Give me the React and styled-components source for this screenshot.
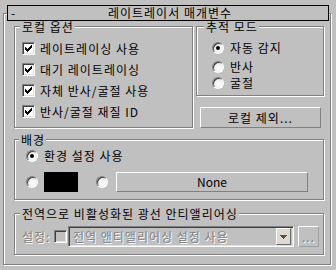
import React from "react";
import styled, { createGlobalStyle } from "styled-components";

const BG = "#c0c0c0";

const Global = createGlobalStyle`
  html, body { margin: 0; padding: 0; background: ${BG}; }
  * { box-sizing: border-box; }
`;

const Page = styled.div`
  width: 336px;
  height: 270px;
  overflow: hidden;
  background: ${BG};
  padding-top: 5px;
  font-family: "Noto Sans CJK KR", "Noto Sans", sans-serif;
  font-size: 12px;
  letter-spacing: 1px;
  color: #000;
`;

const TitleBar = styled.div`
  position: relative;
  z-index: 1;
  margin-left: 7px;
  width: 322px;
  height: 16px;
  border: 1px solid #000;
  background: ${BG};
  display: flex;
  align-items: center;
  padding-left: 3px;
  line-height: 14px;
`;

const Collapse = styled.span`
  width: 5px;
`;

const TitleText = styled.span`
  flex: 1;
  text-align: center;
  padding-right: 4px;
  white-space: nowrap;
`;

const Rollout = styled.div`
  margin: -8px 0 0 3px;
  width: 328px;
  height: 252px;
  border: 1px solid #808080;
  box-shadow: inset 1px 1px 0 #fff, 1px 1px 0 #fff;
  padding: 12px 0 0 10px;
  display: flex;
  flex-direction: column;
  align-items: flex-start;
`;

const TopRow = styled.div`
  display: grid;
  grid-template-columns: 179px 128px;
  column-gap: 3px;
  align-items: start;
`;

const Column = styled.div`
  display: flex;
  flex-direction: column;
  align-items: flex-start;
`;

const Group = styled.div`
  width: ${(p) => p.$w}px;
  height: ${(p) => p.$h}px;
  margin-top: ${(p) => p.$mt || 0}px;
  border: 1px solid #808080;
  box-shadow: inset 1px 1px 0 #fff, 1px 1px 0 #fff;
  display: flex;
  flex-direction: column;
  align-items: flex-start;
`;

const Legend = styled.span`
  margin: -6px 0 0 ${(p) => p.$indent}px;
  padding: 0 1px 0 2px;
  height: 12px;
  line-height: 12px;
  background: ${BG};
  white-space: nowrap;
`;

const Row = styled.div`
  display: flex;
  align-items: center;
  height: ${(p) => p.$h}px;
  margin-top: ${(p) => p.$mt || 0}px;
  padding-left: ${(p) => p.$pl}px;
  gap: ${(p) => p.$gap || 0}px;
  white-space: nowrap;
  line-height: 14px;
`;

const CheckBox = styled.span`
  width: 13px;
  height: 13px;
  flex-shrink: 0;
  border: 1px solid;
  border-color: #808080 #fff #fff #808080;
  box-shadow: inset 1px 1px 0 #404040, inset -1px -1px 0 #dfdfdf;
  background: ${(p) => (p.$disabled ? BG : "#fff")};
  display: flex;
  align-items: center;
  justify-content: center;
`;

const Radio = styled.span`
  width: 12px;
  height: 12px;
  flex-shrink: 0;
  border-radius: 50%;
  border: 1px solid;
  border-color: #808080 #fff #fff #808080;
  background: radial-gradient(circle at 60% 60%, #fff 0%, #ececec 55%, #cfcfcf 100%);
  box-shadow: inset 1px 1px 0 #404040;
  display: flex;
  align-items: center;
  justify-content: center;
  margin-left: ${(p) => p.$ml || 0}px;
  &::after {
    content: "";
    width: 4px;
    height: 4px;
    border-radius: 50%;
    background: #000;
    display: ${(p) => (p.$on ? "block" : "none")};
  }
`;

const PushButton = styled.div`
  width: ${(p) => p.$w}px;
  height: ${(p) => p.$h}px;
  margin-top: ${(p) => p.$mt || 0}px;
  margin-left: ${(p) => p.$ml || 0}px;
  border: 1px solid;
  border-color: ${(p) =>
    p.$disabled ? "#fff #a0a0a0 #a0a0a0 #fff" : "#fff #808080 #808080 #fff"};
  background: ${BG};
  display: flex;
  align-items: center;
  justify-content: center;
  line-height: 14px;
  white-space: nowrap;
  flex-shrink: 0;
  letter-spacing: ${(p) => (p.$latin ? "0" : "1px")};
  color: ${(p) => (p.$disabled ? "#808080" : "#000")};
  text-shadow: ${(p) => (p.$disabled ? "1px 1px 0 #fff" : "none")};
`;

const Swatch = styled.span`
  width: 34px;
  height: 20px;
  margin-left: 6px;
  background: #000;
  flex-shrink: 0;
`;

const DisabledLabel = styled.span`
  width: 32px;
  color: #808080;
  text-shadow: 1px 1px 0 #fff;
`;

const Combo = styled.div`
  width: 226px;
  height: 21px;
  margin-left: 1px;
  border: 1px solid;
  border-color: #808080 #fff #fff #808080;
  box-shadow: inset 1px 1px 0 #404040, inset -1px -1px 0 #dfdfdf;
  padding: 2px 2px 2px 4px;
  display: flex;
  align-items: center;
  background: ${BG};
`;

const ComboText = styled.span`
  flex: 1;
  color: #808080;
  text-shadow: 1px 1px 0 #fff;
  line-height: 14px;
`;

const ComboArrow = styled.span`
  width: 15px;
  height: 17px;
  border: 1px solid;
  border-color: #fff #6a6a6a #6a6a6a #fff;
  background: #dedad0;
  display: flex;
  align-items: center;
  justify-content: center;
`;

const CheckMark = () => (
  <svg width="7" height="7" viewBox="0 0 7 7" shapeRendering="crispEdges">
    {[2, 3, 4, 3, 2, 1, 0].map((t, x) => (
      <rect key={x} x={x} y={t} width="1" height="3" fill="#000" />
    ))}
  </svg>
);

const Check = ({ label }) => (
  <Row $h={21} $pl={7} $gap={5}>
    <CheckBox>
      <CheckMark />
    </CheckBox>
    <span>{label}</span>
  </Row>
);

export default function App() {
  return (
    <Page>
      <Global />
      <TitleBar>
        <Collapse>-</Collapse>
        <TitleText>레이트레이서 매개변수</TitleText>
      </TitleBar>
      <Rollout>
        <TopRow>
          <Group $w={179} $h={102}>
            <Legend $indent={5}>로컬 옵션</Legend>
            <Row $h={5} $pl={0} />
            <Check label="레이트레이싱 사용" />
            <Check label="대기 레이트레이싱" />
            <Check label="자체 반사/굴절 사용" />
            <Check label="반사/굴절 재질 ID" />
          </Group>
          <Column>
            <Group $w={128} $h={70}>
              <Legend $indent={7}>추적 모드</Legend>
              <Row $h={16} $mt={7} $pl={15} $gap={6}>
                <Radio $on />
                <span>자동 감지</span>
              </Row>
              <Row $h={16} $mt={3} $pl={15} $gap={6}>
                <Radio />
                <span>반사</span>
              </Row>
              <Row $h={16} $pl={15} $gap={6}>
                <Radio />
                <span>굴절</span>
              </Row>
            </Group>
            <PushButton $w={121} $h={21} $mt={11} $ml={4}>
              로컬 제외...
            </PushButton>
          </Column>
        </TopRow>

        <Group $w={310} $h={61} $mt={11}>
          <Legend $indent={4}>배경</Legend>
          <Row $h={16} $mt={2} $pl={11} $gap={6}>
            <Radio $on />
            <span>환경 설정 사용</span>
          </Row>
          <Row $h={20} $mt={8} $pl={11}>
            <Radio />
            <Swatch />
            <Radio $ml={18} />
            <PushButton $w={192} $h={20} $ml={8} $latin>
              None
            </PushButton>
          </Row>
        </Group>

        <Group $w={310} $h={42} $mt={13}>
          <Legend $indent={5}>전역으로 비활성화된 광선 안티앨리어싱</Legend>
          <Row $h={21} $mt={6} $pl={7}>
            <DisabledLabel>설정:</DisabledLabel>
            <CheckBox $disabled />
            <Combo>
              <ComboText>전역 앤티앨리어싱 설정 사용</ComboText>
              <ComboArrow>
                <svg width="7" height="4" viewBox="0 0 7 4" shapeRendering="crispEdges">
                  <path d="M0 0H7L3.5 4Z" fill="#505050" />
                </svg>
              </ComboArrow>
            </Combo>
            <PushButton $w={21} $h={21} $ml={4} $disabled>
              ...
            </PushButton>
          </Row>
        </Group>
      </Rollout>
    </Page>
  );
}
